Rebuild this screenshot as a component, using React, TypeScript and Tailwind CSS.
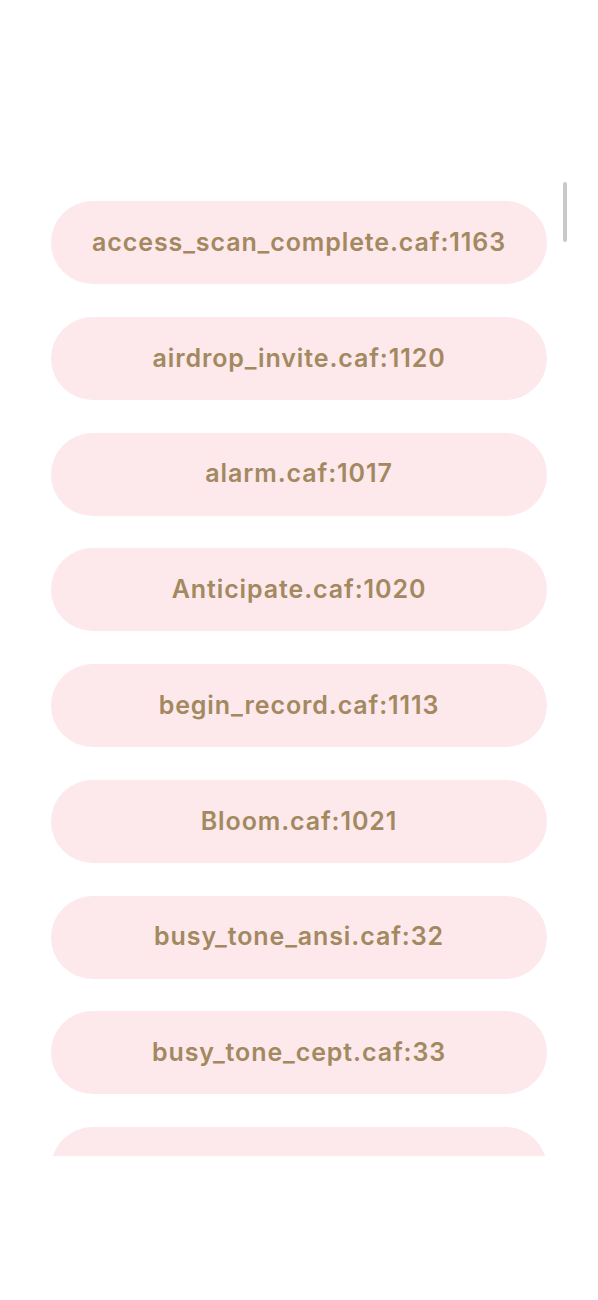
import React from 'react';

const sounds: string[] = [
    'access_scan_complete.caf:1163',
    'airdrop_invite.caf:1120',
    'alarm.caf:1017',
    'Anticipate.caf:1020',
    'begin_record.caf:1113',
    'Bloom.caf:1021',
    'busy_tone_ansi.caf:32',
    'busy_tone_cept.caf:33',
    '',
];

export default function App() {
    return (
        <div className="w-[598px] h-[1300px] bg-white relative" style={{ fontFamily: '"Inter", "Liberation Sans", sans-serif' }}>
            {/* scroll indicator */}
            <div className="absolute left-[563px] top-[182px] w-[4px] h-[60px] rounded-full bg-[#c9c9c9]" />
            <div className="pt-[201px] px-[51px]">
                <div className="h-[955px] overflow-hidden flex flex-col gap-[32.75px]">
                    {sounds.map((s, i) => (
                        <button
                            key={i}
                            className="shrink-0 w-[496px] h-[83px] rounded-full bg-[#fde8ec] flex items-center justify-center text-[25px] font-semibold text-[#a2895f] tracking-[0.9px]"
                        >
                            {s}
                        </button>
                    ))}
                </div>
            </div>
        </div>
    );
}
